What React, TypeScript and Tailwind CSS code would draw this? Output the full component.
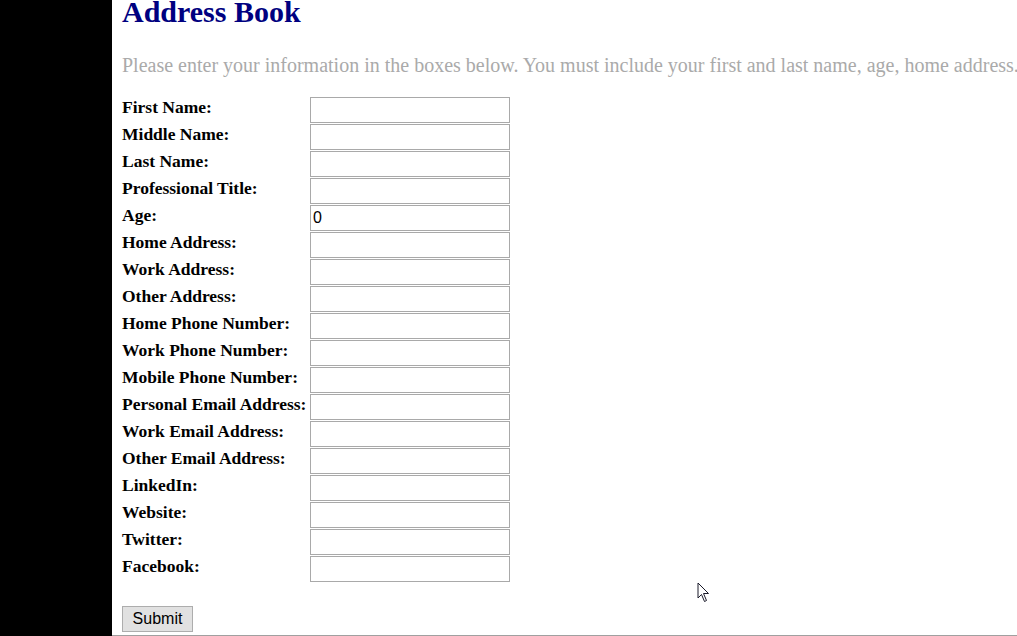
import React from "react";

const fields = [
  "First Name:",
  "Middle Name:",
  "Last Name:",
  "Professional Title:",
  "Age:",
  "Home Address:",
  "Work Address:",
  "Other Address:",
  "Home Phone Number:",
  "Work Phone Number:",
  "Mobile Phone Number:",
  "Personal Email Address:",
  "Work Email Address:",
  "Other Email Address:",
  "LinkedIn:",
  "Website:",
  "Twitter:",
  "Facebook:",
];

export default function App() {
  return (
    <div className="relative flex h-[636px] w-[1017px] overflow-hidden bg-white font-['Liberation_Serif',serif]">
      <div className="w-[112px] shrink-0 bg-black" />
      <div className="flex min-w-0 flex-1 flex-col border-b border-[#a0a0a0] pl-[10px]">
        <h1 className="h-[24px] whitespace-nowrap text-[30px] font-bold leading-[24px] text-[#000080]">
          Address Book
        </h1>
        <p className="mt-[29px] h-[24px] whitespace-nowrap text-[20px] leading-[24px] text-[#aaaaaa]">
          Please enter your information in the boxes below. You must include
          your first and last name, age, home address.
        </p>
        <form className="mt-[20px] flex flex-col">
          <div className="grid grid-cols-[188px_200px] gap-y-[1px]">
            {fields.map((label) => (
              <React.Fragment key={label}>
                <label className="h-[26px] whitespace-nowrap text-[17.5px] font-bold leading-[20px] text-black">
                  {label}
                </label>
                <input
                  type="text"
                  defaultValue={label === "Age:" ? "0" : ""}
                  className="h-[26px] w-[200px] border border-[#a9a9a9] bg-white px-[2px] font-['Liberation_Sans',sans-serif] text-[16px] text-black outline-none"
                />
              </React.Fragment>
            ))}
          </div>
          <div className="mt-[24px]">
            <button
              type="button"
              className="h-[26px] w-[71px] border border-[#adadad] bg-[#e1e1e1] font-['Liberation_Sans',sans-serif] text-[16px] leading-[22px] text-black"
            >
              Submit
            </button>
          </div>
        </form>
      </div>
      <svg
        className="absolute left-[697px] top-[582px]"
        width="13"
        height="21"
        viewBox="0 0 13 21"
      >
        <path
          d="M1 1 L1 16 L4.5 12.5 L7.5 19.5 L9.5 18.5 L6.5 11.5 L11.5 11.5 Z"
          fill="white"
          stroke="#1a1a2a"
          strokeWidth="1"
          strokeLinejoin="miter"
        />
      </svg>
    </div>
  );
}
